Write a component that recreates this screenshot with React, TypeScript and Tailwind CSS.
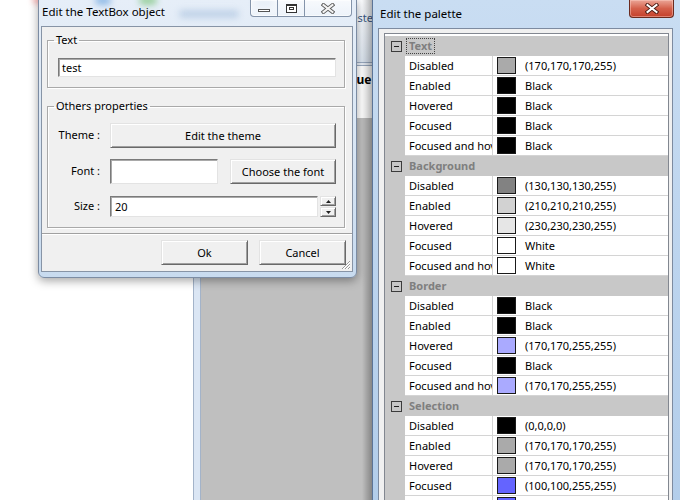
import React from "react";

type Row = { name: string; color: string; value: string };
type Section = { title: string; focused?: boolean; rows: Row[] };

const sections: Section[] = [
  {
    title: "Text",
    focused: true,
    rows: [
      { name: "Disabled", color: "#aaaaaa", value: "(170,170,170,255)" },
      { name: "Enabled", color: "#000000", value: "Black" },
      { name: "Hovered", color: "#000000", value: "Black" },
      { name: "Focused", color: "#000000", value: "Black" },
      { name: "Focused and hovered", color: "#000000", value: "Black" },
    ],
  },
  {
    title: "Background",
    rows: [
      { name: "Disabled", color: "#828282", value: "(130,130,130,255)" },
      { name: "Enabled", color: "#d2d2d2", value: "(210,210,210,255)" },
      { name: "Hovered", color: "#e6e6e6", value: "(230,230,230,255)" },
      { name: "Focused", color: "#ffffff", value: "White" },
      { name: "Focused and hovered", color: "#ffffff", value: "White" },
    ],
  },
  {
    title: "Border",
    rows: [
      { name: "Disabled", color: "#000000", value: "Black" },
      { name: "Enabled", color: "#000000", value: "Black" },
      { name: "Hovered", color: "#aaaaff", value: "(170,170,255,255)" },
      { name: "Focused", color: "#000000", value: "Black" },
      { name: "Focused and hovered", color: "#aaaaff", value: "(170,170,255,255)" },
    ],
  },
  {
    title: "Selection",
    rows: [
      { name: "Disabled", color: "#000000", value: "(0,0,0,0)" },
      { name: "Enabled", color: "#aaaaaa", value: "(170,170,170,255)" },
      { name: "Hovered", color: "#aaaaaa", value: "(170,170,170,255)" },
      { name: "Focused", color: "#6464ff", value: "(100,100,255,255)" },
      { name: "Focused and hovered", color: "#6464ff", value: "(100,100,255,255)" },
    ],
  },
];

const btn =
  "flex items-center justify-center bg-[#f0f0f0] border border-t-[#e3e3e3] border-l-[#e3e3e3] border-r-[#696969] border-b-[#696969] shadow-[inset_1px_1px_0_#ffffff,inset_-1px_-1px_0_#a0a0a0] text-black leading-[15px]";
const field =
  "bg-white border border-t-[#7a7a7a] border-l-[#7a7a7a] border-r-[#e3e3e3] border-b-[#e3e3e3] shadow-[inset_1px_1px_0_#a9a9a9]";

function XGlyph({ dark = "#3a3a3a", light = "#ffffff" }: { dark?: string; light?: string }) {
  return (
    <svg width="14" height="11" viewBox="0 0 14 11">
      <path d="M2.5 2 L11.5 9 M11.5 2 L2.5 9" stroke={dark} strokeWidth="3.8" strokeLinecap="square" fill="none" />
      <path d="M2.5 2 L11.5 9 M11.5 2 L2.5 9" stroke={light} strokeWidth="2" strokeLinecap="square" fill="none" />
    </svg>
  );
}

function BackgroundApp() {
  return (
    <div className="absolute left-[193px] top-0 w-[190px] h-[500px] flex">
      <div className="w-[8px] h-full border-x border-[#a3b3c9] bg-[#dbe6f4]" />
      <div className="flex-1 flex flex-col">
        <div className="h-[62px] bg-gradient-to-b from-[#fbfcfe] via-[#eef3f9] to-[#dce5f0] pl-[145px] pt-[10px] text-[#3b5a86]">
          <span className="leading-[14px] whitespace-nowrap">Tester</span>
        </div>
        <div className="h-[4px] border-y border-[#9aaac0] bg-[#e8eef6]" />
        <div className="h-[52px] bg-white pl-[144px] pt-[6px]">
          <span className="font-bold text-[12px] leading-[16px] whitespace-nowrap">Blue</span>
        </div>
        <div className="flex-1 bg-[#bfbfbf]" />
      </div>
    </div>
  );
}

function TextBoxWindow() {
  return (
    <div className="absolute left-[38px] top-[-1px] w-[319px] h-[279px] flex flex-col border border-[#7c8ca3] rounded-b-[6px] bg-gradient-to-b from-[#e6eef8] via-[#d9e6f4] to-[#c8dbef] shadow-[0_3px_10px_rgba(0,0,0,0.35)]">
      <div className="relative h-[26px] shrink-0 flex items-start pl-[3px] pr-[4px] overflow-hidden">
        <div className="absolute left-[56px] top-[-4px] w-[16px] h-[9px] rounded-full bg-[#6fa6e0]/70 blur-[3px]" />
        <div className="absolute left-[100px] top-[-4px] w-[18px] h-[9px] rounded-full bg-[#7cc47c]/70 blur-[3px]" />
        <div className="absolute left-[140px] top-[10px] w-[60px] h-[8px] rounded-full bg-[#a9c2de]/60 blur-[3px]" />
        <div className="absolute left-[215px] top-[-3px] w-[20px] h-[8px] rounded-full bg-[#9db9d9]/60 blur-[3px]" />
        <span className="relative mt-[4px] text-[11.5px] leading-[15px] text-black whitespace-nowrap">Edit the TextBox object</span>
        <div className="relative ml-auto flex h-[17px] border border-t-0 border-[#8494aa] rounded-b-[4px] bg-gradient-to-b from-white/70 to-white/30 shadow-[inset_0_0_0_1px_rgba(255,255,255,0.6)]">
          <div className="w-[27px] flex items-end justify-center pb-[4px] border-r border-[#8494aa]">
            <div className="w-[12px] h-[3px] border border-[#555] bg-white" />
          </div>
          <div className="w-[27px] flex items-center justify-center border-r border-[#8494aa]">
            <div className="w-[11px] h-[9px] border border-[#333] border-t-2 bg-white flex items-center justify-center">
              <div className="w-[5px] h-[3px] border border-[#333]" />
            </div>
          </div>
          <div className="w-[46px] flex items-center justify-center">
            <XGlyph dark="#5a5a5a" light="#f4f4f4" />
          </div>
        </div>
      </div>
      <div className="relative ml-[2px] mr-[3px] h-[246px] border border-[#8794a6] bg-[#f0f0f0] flex flex-col">
        <fieldset className="ml-[5px] mr-[7px] mt-[6px] min-w-0 border border-[#a9a9a9] shadow-[inset_1px_1px_0_#ffffff,1px_1px_0_#ffffff] pb-[10px]">
          <legend className="ml-[6px] px-[2px] leading-[14px]">Text</legend>
          <div className={field + " ml-[10px] mr-[8px] mt-[11px] h-[19px] pl-[3px] leading-[17px]"}>test</div>
        </fieldset>
        <fieldset className="ml-[5px] mr-[7px] mt-[11px] min-w-0 border border-[#a9a9a9] shadow-[inset_1px_1px_0_#ffffff,1px_1px_0_#ffffff] pb-[10px]">
          <legend className="ml-[6px] px-[2px] leading-[14px]">Others properties</legend>
          <div className="mt-[10px] mr-[8px] flex items-center h-[25px]">
            <span className="w-[52px] shrink-0 text-right whitespace-nowrap">Theme :</span>
            <button className={btn + " ml-[10px] flex-1 h-full"}>Edit the theme</button>
          </div>
          <div className="mt-[11px] mr-[8px] flex items-center h-[25px]">
            <span className="w-[52px] shrink-0 text-right whitespace-nowrap">Font :</span>
            <div className={field + " ml-[10px] w-[108px] h-full"} />
            <button className={btn + " ml-[12px] flex-1 h-full"}>Choose the font</button>
          </div>
          <div className="mt-[12px] mr-[8px] flex items-center h-[21px]">
            <span className="w-[52px] shrink-0 text-right whitespace-nowrap">Size :</span>
            <div className={field + " ml-[10px] flex-1 h-full pl-[4px] leading-[19px]"}>20</div>
            <div className="ml-[2px] w-[16px] h-full flex flex-col gap-[1px]">
              <div className={btn + " flex-1"}>
                <svg width="5" height="3" viewBox="0 0 5 3"><path d="M0 3 L2.5 0 L5 3 Z" fill="#222" /></svg>
              </div>
              <div className={btn + " flex-1"}>
                <svg width="5" height="3" viewBox="0 0 5 3"><path d="M0 0 L2.5 3 L5 0 Z" fill="#222" /></svg>
              </div>
            </div>
          </div>
        </fieldset>
        <div className="mt-[5px] h-[2px] border-t border-[#a0a0a0] border-b border-b-white" />
        <div className="mt-[5px] mr-[6px] flex justify-end gap-[11px]">
          <button className={btn + " w-[87px] h-[25px]"}>Ok</button>
          <button className={btn + " w-[87px] h-[25px]"}>Cancel</button>
        </div>
        <svg className="absolute right-[1px] bottom-[1px]" width="11" height="11" viewBox="0 0 11 11">
          <path d="M10 2 L2 10 M10 5 L5 10 M10 8 L8 10" stroke="#9a9a9a" strokeWidth="1" />
          <path d="M10 3 L3 10 M10 6 L6 10 M10 9 L9 10" stroke="#ffffff" strokeWidth="1" />
        </svg>
      </div>
    </div>
  );
}

function SectionHeader({ title, focused }: { title: string; focused?: boolean }) {
  return (
    <div className="flex h-[20px] items-center bg-[#c8c8c8]">
      <div className="w-[20px] shrink-0 flex items-center pl-[6px]">
        <div className="w-[11px] h-[11px] border border-[#3c3c3c] flex items-center justify-center">
          <div className="w-[5px] h-px bg-[#222]" />
        </div>
      </div>
      <span
        className={
          "ml-[1px] px-[2px] font-bold text-[#7f7f7f] leading-[14px] whitespace-nowrap border " +
          (focused ? "border-dotted border-[#444]" : "border-transparent")
        }
      >
        {title}
      </span>
    </div>
  );
}

function PaletteRow({ row }: { row: Row }) {
  return (
    <div className="flex h-[20px]">
      <div className="w-[20px] shrink-0 bg-[#c8c8c8]" />
      <div className="w-[88px] shrink-0 border-b border-r border-[#d4d4d4] bg-white pl-[4px] leading-[19px] whitespace-nowrap overflow-hidden">
        {row.name}
      </div>
      <div className="flex-1 flex items-center gap-[9px] border-b border-[#d4d4d4] bg-white pl-[4px] whitespace-nowrap overflow-hidden">
        <div className="w-[19px] h-[17px] shrink-0 border border-[#1a1a1a]" style={{ backgroundColor: row.color }} />
        <span className="leading-[15px]">{row.value}</span>
      </div>
    </div>
  );
}

function PaletteWindow() {
  return (
    <div className="absolute left-[372px] top-[-1px] w-[312px] h-[520px] flex flex-col border border-[#5c7598] bg-gradient-to-b from-[#c9ddf2] via-[#bcd4ee] to-[#b2cdea]">
      <div className="h-[28px] shrink-0 flex items-start">
        <span className="ml-[7px] mt-[6px] text-[11.5px] leading-[15px] whitespace-nowrap">Edit the palette</span>
        <div className="ml-auto mr-[9px] w-[45px] h-[18px] flex items-center justify-center rounded-b-[4px] border border-t-0 border-[#6b2a1e] bg-gradient-to-b from-[#eaa597] via-[#d4604b] to-[#c43f2a] shadow-[inset_0_0_0_1px_rgba(255,210,200,0.45)]">
          <XGlyph dark="#4a1a12" light="#ffffff" />
        </div>
      </div>
      <div className="ml-[5px] w-[295px] flex-1 border border-[#7d8ba0] bg-[#f0f0f0] pl-[5px] pt-[4px]">
        <div className="w-[285px] border border-[#828790] bg-white pt-[2px]">
          {sections.map((s) => (
            <div key={s.title}>
              <SectionHeader title={s.title} focused={s.focused} />
              {s.rows.map((r) => (
                <PaletteRow key={s.title + r.name} row={r} />
              ))}
            </div>
          ))}
        </div>
      </div>
    </div>
  );
}

export default function App() {
  return (
    <div className="relative w-[680px] h-[500px] overflow-hidden bg-white font-['Noto_Sans',sans-serif] text-[11px] text-black">
      <BackgroundApp />
      <div className="absolute left-[362px] top-0 w-[10px] h-[500px] bg-gradient-to-r from-transparent to-black/30" />
      <div className="absolute left-[33px] top-[-5px] w-[14px] h-[9px] rounded-full bg-[#e06060]/60 blur-[3px]" />
      <TextBoxWindow />
      <PaletteWindow />
    </div>
  );
}
